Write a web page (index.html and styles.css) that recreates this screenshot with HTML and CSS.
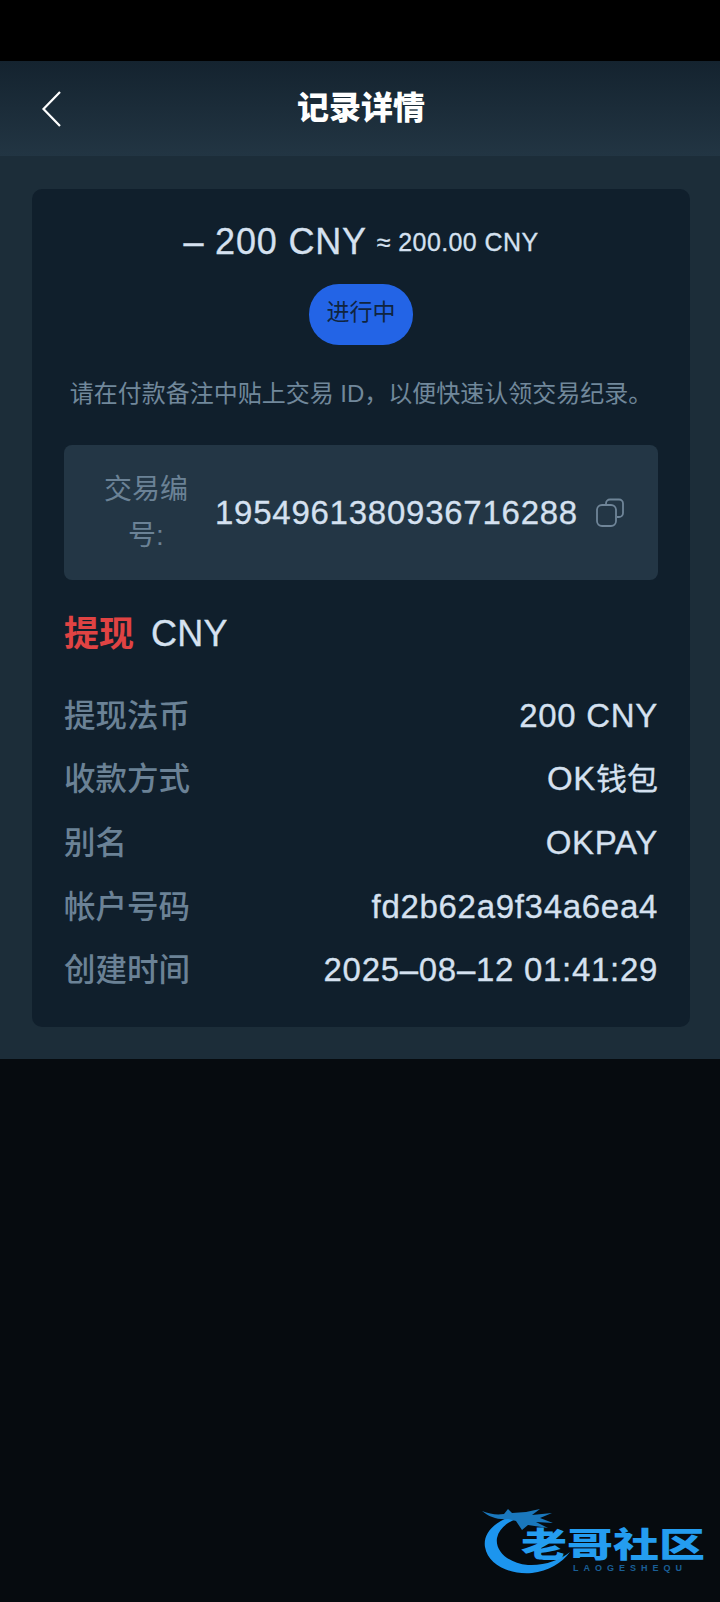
FILE: index.html
```html
<!DOCTYPE html>
<html lang="zh">
<head>
<meta charset="utf-8">
<title>记录详情</title>
<link rel="stylesheet" href="styles.css">
</head>
<body>
<div class="statusbar"></div>
<header class="topbar">
  <svg class="back" width="24" height="38" viewBox="0 0 24 38"><path d="M20 2 L3.500 19 L20 36" fill="none" stroke="#fff" stroke-width="2.200"/></svg>
  <h1 class="title">记录详情</h1>
</header>
<main class="content">
  <section class="card">
    <div class="amount"><span class="amount-main">– 200 CNY</span><span class="amount-approx">≈ 200.00 CNY</span></div>
    <div class="status">进行中</div>
    <p class="hint">请在付款备注中贴上交易 ID，以便快速认领交易纪录。</p>
    <div class="txbox">
      <div class="txlabel">交易编号:</div>
      <div class="txid">1954961380936716288</div>
      <svg class="copy" width="30" height="30" viewBox="0 0 30 30" fill="none" stroke="#6f8598" stroke-width="1.800"><path d="M11 6.500 V5.500 A4 4 0 0 1 15 1.500 H24 A4 4 0 0 1 28 5.500 V15 A4 4 0 0 1 24 19 H22"/><rect x="2" y="7" width="19" height="21" rx="5"/></svg>
    </div>
    <div class="kind"><span class="kind-name">提现</span><span class="kind-cur">CNY</span></div>
    <dl class="rows">
      <div class="row"><dt>提现法币</dt><dd>200 CNY</dd></div>
      <div class="row"><dt>收款方式</dt><dd>OK<span class="cjk">钱包</span></dd></div>
      <div class="row"><dt>别名</dt><dd>OKPAY</dd></div>
      <div class="row"><dt>帐户号码</dt><dd>fd2b62a9f34a6ea4</dd></div>
      <div class="row"><dt>创建时间</dt><dd>2025–08–12 01:41:29</dd></div>
    </dl>
  </section>
</main>
<div class="rest">
  <div class="logo">
    <svg class="dragon" width="100" height="72" viewBox="0 0 100 72" fill="none">
      <path d="M30 12 C12 18 3 30 5 42 C8 60 30 70 52 68 C68 66 82 58 90 47 C80 55 64 61 48 60 C28 58 15 46 17 33 C19 24 26 18 36 14 Z" fill="#1c95ee"/>
      <path d="M2 6 C10 9 16 10 24 9 L28 4 L32 8 L46 7 L60 4 L52 10 L72 8 L60 13 L73 18 L56 17 L68 23 L48 20 L42 25 L36 16 L28 14 C18 15 9 12 2 6 Z" fill="#1a78bd"/>
    </svg>
    <div class="logo-text">老哥社区</div>
    <div class="logo-sub">LAOGESHEQU</div>
  </div>
</div>
</body>
</html>
```
FILE: styles.css
```css
* { box-sizing: border-box; }
html, body { margin: 0; padding: 0; }
body {
  width: 720px;
  height: 1602px;
  background: #060b0f;
  font-family: "Liberation Sans", "Noto Sans CJK SC", sans-serif;
  display: flex;
  flex-direction: column;
  overflow: hidden;
}
.statusbar { height: 61px; background: #000; flex: none; }
.topbar {
  height: 95px;
  flex: none;
  background: linear-gradient(180deg, #14232f 0%, #223543 100%);
  display: flex;
  align-items: center;
  justify-content: center;
  position: relative;
}
.back { position: absolute; left: 40px; top: 29px; }
.title { margin: 0; color: #fff; font-size: 32px; font-weight: 900; line-height: 1; padding-left: 2px; padding-bottom: 2px; }
.content { background: #1c2d39; height: 903px; flex: none; padding: 33px 30px 32px 32px; }
.card {
  height: 838px;
  background: #101f2c;
  border-radius: 10px;
  padding: 33px 32px 0;
  display: flex;
  flex-direction: column;
}
.amount { display: flex; justify-content: center; align-items: center; gap: 10px; color: #d5e1f0; height: 40px; line-height: 40px; -webkit-text-stroke: 0.3px #d5e1f0; }
.amount-main { font-size: 36px; letter-spacing: 0.800px; }
.amount-approx { font-size: 25px; letter-spacing: 0.400px; }
.status {
  align-self: center;
  margin-top: 22px;
  width: 104px;
  height: 61px;
  border-radius: 30px;
  background: #2364e6;
  color: #10243f;
  font-size: 23px;
  line-height: 30px;
  display: flex;
  align-items: center;
  justify-content: center;
  padding-bottom: 5px;
}
.hint { margin: 33px 0 0; text-align: center; color: #71889b; font-size: 24px; line-height: 32px; white-space: nowrap; }
.txbox {
  margin-top: 35px;
  height: 135px;
  background: #233645;
  border-radius: 8px;
  display: flex;
  align-items: center;
  padding: 0 33px 0 36px;
}
.txlabel { width: 92px; flex: none; color: #6b8296; font-size: 28px; line-height: 46px; text-align: center; }
.txid { margin-left: 23px; color: #d5e1f0; font-size: 33px; letter-spacing: 0.750px; flex: none; white-space: nowrap; -webkit-text-stroke: 0.3px #d5e1f0; }
.copy { margin-left: auto; flex: none; }
.kind { margin-top: 33px; display: flex; align-items: center; gap: 17px; height: 42px; }
.kind-name { color: #e04343; font-size: 35px; font-weight: 700; line-height: 42px; }
.kind-cur { color: #d5e1f0; font-size: 36px; letter-spacing: 0.200px; line-height: 42px; -webkit-text-stroke: 0.3px #d5e1f0; }
.rows { margin: 29px 0 0; display: flex; flex-direction: column; }
.row { display: flex; justify-content: space-between; align-items: center; height: 63.600px; }
.row dt { color: #6b8296; font-size: 31.500px; font-weight: 500; line-height: 40px; }
.row dd { margin: 0; color: #d5e1f0; font-size: 33px; letter-spacing: 0.700px; line-height: 40px; -webkit-text-stroke: 0.3px #d5e1f0; }
.row .cjk { font-size: 31px; letter-spacing: 0; }
.rest { flex: 1; position: relative; }
.logo { position: absolute; left: 480px; top: 446px; width: 225px; height: 80px; }
.dragon { position: absolute; left: 0; top: 0; }
.logo-text {
  position: absolute;
  left: 41px;
  top: 23px;
  color: #249df0;
  font-size: 46px;
  font-weight: 900;
  line-height: 34px;
  white-space: nowrap;
  transform: scaleY(0.74);
}
.logo-sub { position: absolute; left: 93px; top: 58px; color: #1a5f96; font-size: 9px; line-height: 10px; letter-spacing: 5px; font-weight: 700; white-space: nowrap; }
```
